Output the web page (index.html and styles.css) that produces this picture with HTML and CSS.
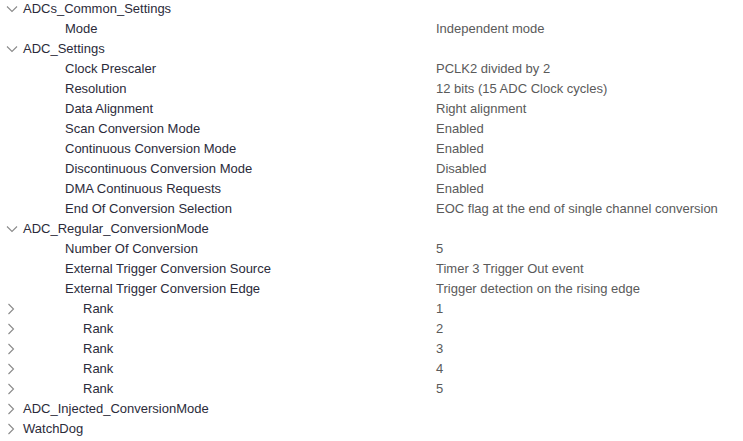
FILE: index.html
```html
<!DOCTYPE html>
<html lang="en">
<head>
    <meta charset="UTF-8">
    <title>ADC Parameter Settings</title>
    <link rel="stylesheet" href="styles.css">
</head>
<body>
    <div class="tree">
        <div class="row group">
            <span class="toggle"><svg class="chev" viewBox="0 0 12 8"><path d="M1 1.5 L6 6.5 L11 1.5"/></svg></span>
            <span class="name">ADCs_Common_Settings</span>
        </div>
        <div class="row item">
            <span class="name">Mode</span><span class="value">Independent mode</span>
        </div>

        <div class="row group">
            <span class="toggle"><svg class="chev" viewBox="0 0 12 8"><path d="M1 1.5 L6 6.5 L11 1.5"/></svg></span>
            <span class="name">ADC_Settings</span>
        </div>
        <div class="row item"><span class="name">Clock Prescaler</span><span class="value">PCLK2 divided by 2</span></div>
        <div class="row item"><span class="name">Resolution</span><span class="value">12 bits (15 ADC Clock cycles)</span></div>
        <div class="row item"><span class="name">Data Alignment</span><span class="value">Right alignment</span></div>
        <div class="row item"><span class="name">Scan Conversion Mode</span><span class="value">Enabled</span></div>
        <div class="row item"><span class="name">Continuous Conversion Mode</span><span class="value">Enabled</span></div>
        <div class="row item"><span class="name">Discontinuous Conversion Mode</span><span class="value">Disabled</span></div>
        <div class="row item"><span class="name">DMA Continuous Requests</span><span class="value">Enabled</span></div>
        <div class="row item"><span class="name">End Of Conversion Selection</span><span class="value">EOC flag at the end of single channel conversion</span></div>

        <div class="row group">
            <span class="toggle"><svg class="chev" viewBox="0 0 12 8"><path d="M1 1.5 L6 6.5 L11 1.5"/></svg></span>
            <span class="name">ADC_Regular_ConversionMode</span>
        </div>
        <div class="row item"><span class="name">Number Of Conversion</span><span class="value">5</span></div>
        <div class="row item"><span class="name">External Trigger Conversion Source</span><span class="value">Timer 3 Trigger Out event</span></div>
        <div class="row item"><span class="name">External Trigger Conversion Edge</span><span class="value">Trigger detection on the rising edge</span></div>
        <div class="row rank">
            <span class="toggle"><svg class="chev-r" viewBox="0 0 8 12"><path d="M1.5 1 L6.5 6 L1.5 11"/></svg></span>
            <span class="name">Rank</span><span class="value">1</span>
        </div>
        <div class="row rank">
            <span class="toggle"><svg class="chev-r" viewBox="0 0 8 12"><path d="M1.5 1 L6.5 6 L1.5 11"/></svg></span>
            <span class="name">Rank</span><span class="value">2</span>
        </div>
        <div class="row rank">
            <span class="toggle"><svg class="chev-r" viewBox="0 0 8 12"><path d="M1.5 1 L6.5 6 L1.5 11"/></svg></span>
            <span class="name">Rank</span><span class="value">3</span>
        </div>
        <div class="row rank">
            <span class="toggle"><svg class="chev-r" viewBox="0 0 8 12"><path d="M1.5 1 L6.5 6 L1.5 11"/></svg></span>
            <span class="name">Rank</span><span class="value">4</span>
        </div>
        <div class="row rank">
            <span class="toggle"><svg class="chev-r" viewBox="0 0 8 12"><path d="M1.5 1 L6.5 6 L1.5 11"/></svg></span>
            <span class="name">Rank</span><span class="value">5</span>
        </div>

        <div class="row group">
            <span class="toggle"><svg class="chev-r" viewBox="0 0 8 12"><path d="M1.5 1 L6.5 6 L1.5 11"/></svg></span>
            <span class="name">ADC_Injected_ConversionMode</span>
        </div>
        <div class="row group">
            <span class="toggle"><svg class="chev-r" viewBox="0 0 8 12"><path d="M1.5 1 L6.5 6 L1.5 11"/></svg></span>
            <span class="name">WatchDog</span>
        </div>
    </div>
</body>
</html>
```

FILE: styles.css
```css
* {
    box-sizing: border-box;
    margin: 0;
    padding: 0;
}

body {
    font-family: 'Liberation Sans', Arial, sans-serif;
    font-size: 13px;
    background: #fff;
    color: #2b2b3a;
}

.tree {
    display: flex;
    flex-direction: column;
}

.row {
    display: flex;
    align-items: center;
    height: 20px;
    line-height: 18px;
    padding-bottom: 2px;
    white-space: nowrap;
}

.toggle {
    width: 23px;
    height: 18px;
    display: flex;
    align-items: center;
    padding-left: 6px;
}

.chev {
    width: 12px;
    height: 8px;
    fill: none;
    stroke: #8a8a8a;
    stroke-width: 1.1;
}

.chev-r {
    width: 8px;
    height: 12px;
    margin-left: 1px;
    fill: none;
    stroke: #8a8a8a;
    stroke-width: 1.1;
}

.item {
    padding-left: 65px;
}

.item .name {
    width: 371px;
}

.rank .name {
    margin-left: 60px;
    width: 353px;
}

.value {
    color: #5a5a5a;
}
```
